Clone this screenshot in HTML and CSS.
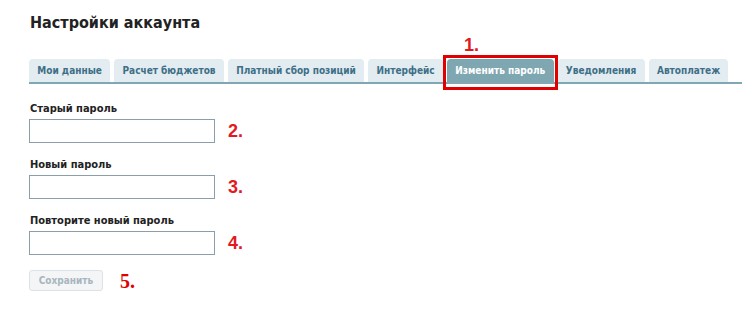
FILE: index.html
```html
<!DOCTYPE html>
<html lang="ru">
<head>
<meta charset="utf-8">
<title>Настройки аккаунта</title>
<link rel="stylesheet" href="styles.css">
</head>
<body>
<div class="page">
  <h1 class="title">Настройки аккаунта</h1>
  <div class="tabs">
    <div class="tab">Мои данные</div>
    <div class="tab">Расчет бюджетов</div>
    <div class="tab">Платный сбор позиций</div>
    <div class="tab">Интерфейс</div>
    <div class="tab tab-active">Изменить пароль<span class="mark-box"></span><span class="mark-num mark-num-1">1.</span></div>
    <div class="tab">Уведомления</div>
    <div class="tab">Автоплатеж</div>
  </div>
  <form class="form">
    <div class="field">
      <label class="label">Старый пароль</label>
      <div class="row"><input class="input" type="password"><span class="num">2.</span></div>
    </div>
    <div class="field">
      <label class="label">Новый пароль</label>
      <div class="row"><input class="input" type="password"><span class="num">3.</span></div>
    </div>
    <div class="field">
      <label class="label">Повторите новый пароль</label>
      <div class="row"><input class="input" type="password"><span class="num">4.</span></div>
    </div>
    <div class="row row-btn"><button class="btn" type="button" disabled>Сохранить</button><span class="num num-serif">5.</span></div>
  </form>
</div>
</body>
</html>
```
FILE: styles.css
```css
html, body {
  margin: 0;
  padding: 0;
  background: #fff;
}
body {
  font-family: "DejaVu Sans Condensed", "DejaVu Sans", sans-serif;
  color: #222;
}
.page {
  padding: 12px 0 0 29px;
}
.title {
  margin: 0 0 0 1px;
  font-size: 16px;
  line-height: 22px;
  font-weight: bold;
  color: #222;
}
.tabs {
  display: flex;
  gap: 4px;
  margin-top: 25px;
  border-bottom: 2px solid #7fa8b4;
  height: 23px;
}
.tab {
  position: relative;
  height: 23px;
  line-height: 23px;
  padding: 0 8.3px;
  background: #e2ecf1;
  border-radius: 4px 4px 0 0;
  font-size: 10px;
  font-weight: bold;
  color: #3e6f86;
  white-space: nowrap;
}
.tab-active {
  background: #7fa7b2;
  color: #fff;
}
.mark-box {
  position: absolute;
  left: -4px;
  top: -4px;
  right: -4px;
  bottom: -8px;
  border: 3px solid #e00000;
}
.mark-num {
  position: absolute;
  font-family: "Liberation Sans", Arial, sans-serif;
  font-weight: bold;
  color: #e21a1f;
  font-size: 18px;
  line-height: 18px;
}
.mark-num-1 {
  left: 17px;
  top: -23px;
}
.form {
  margin-top: 18px;
}
.field {
  margin-bottom: 15px;
}
.label {
  display: block;
  font-size: 11px;
  line-height: 13px;
  font-weight: bold;
  color: #222;
  margin-bottom: 4px;
  padding-left: 1px;
}
.row {
  display: flex;
  align-items: center;
}
.input {
  box-sizing: border-box;
  width: 186px;
  height: 24px;
  margin: 0;
  border: 1px solid #8b9ea9;
  background: #fff;
  padding: 2px 4px;
}
.num {
  margin-left: 13px;
  font-family: "Liberation Sans", Arial, sans-serif;
  font-weight: bold;
  font-size: 18px;
  line-height: 20px;
  color: #e21a1f;
}
.row-btn {
  margin-top: 0;
}
.btn {
  box-sizing: border-box;
  width: 74px;
  height: 21px;
  margin: 0;
  padding: 0;
  border: 1px solid #dce2e6;
  border-radius: 3px;
  background: #f3f5f6;
  font-family: "DejaVu Sans Condensed", "DejaVu Sans", sans-serif;
  font-size: 10px;
  font-weight: bold;
  color: #a9b6be;
}
.num-serif {
  margin-left: 17px;
  font-family: "Liberation Serif", "Times New Roman", serif;
  font-size: 20px;
  color: #e00000;
}
```
